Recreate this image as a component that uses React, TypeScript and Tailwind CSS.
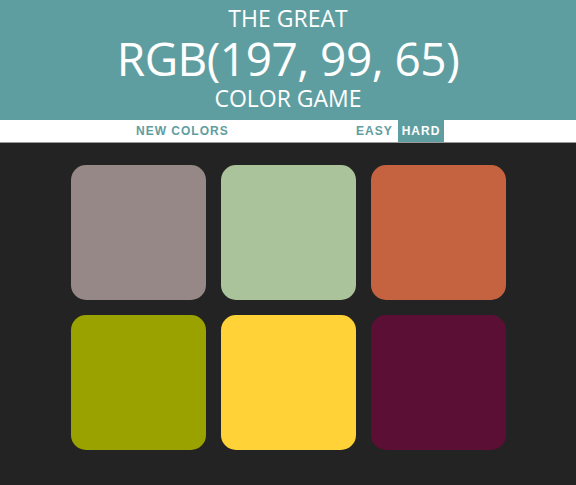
const squares = [
  '#968886',
  '#abc39a',
  '#c56341',
  '#9aa200',
  '#ffd338',
  '#5c0f34',
]

export default function App() {
  return (
    <div className="min-h-[485px] bg-[#232323]">
      <h1 className="flex flex-col items-center bg-[#5f9ea0] pt-[3px] pb-[7px] font-['Open_Sans',sans-serif] font-normal uppercase text-white">
        <span className="text-[23px] leading-[30px]">The Great</span>
        <span className="text-[46px] leading-[50px] tracking-[-0.5px]">RGB(197, 99, 65)</span>
        <span className="text-[23px] leading-[30px]">Color Game</span>
      </h1>
      <div className="flex h-[23px] items-stretch border-b border-[#999] bg-white pl-[136px] font-['Liberation_Sans',sans-serif] text-[12px] font-bold text-[#5f9ea0]">
        <button className="w-[130px] shrink-0 whitespace-nowrap text-left uppercase tracking-[1px]">New Colors</button>
        <div className="w-[90px] shrink-0" />
        <button className="w-[42px] shrink-0 whitespace-nowrap text-left uppercase tracking-[1px]">Easy</button>
        <button className="w-[46px] shrink-0 whitespace-nowrap bg-[#5f9ea0] text-center uppercase tracking-[1px] text-white">Hard</button>
      </div>
      <div className="mx-auto grid w-[435px] grid-cols-3 gap-[15px] pt-[22px]">
        {squares.map((c) => (
          <div key={c} className="h-[135px] rounded-[15px]" style={{ backgroundColor: c }} />
        ))}
      </div>
    </div>
  )
}
